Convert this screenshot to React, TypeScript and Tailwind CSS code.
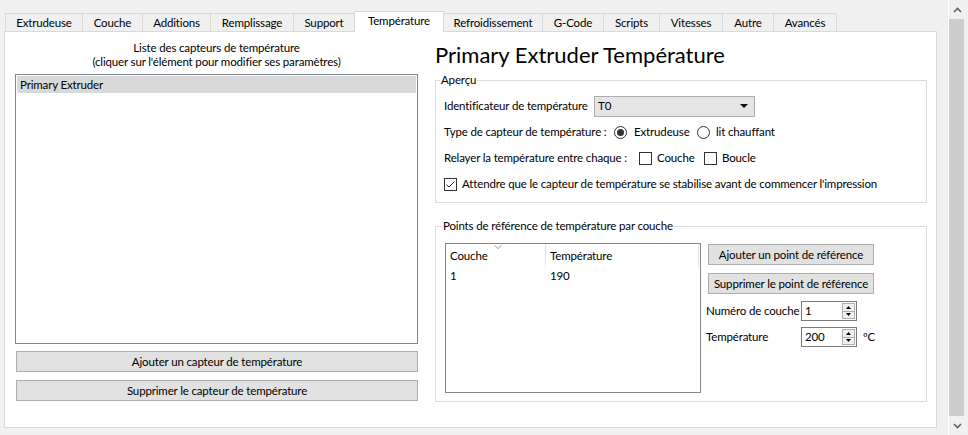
import React from 'react';

const tabs = [
  { label: 'Extrudeuse', w: 'w-[78px]' },
  { label: 'Couche', w: 'w-[61px]' },
  { label: 'Additions', w: 'w-[69px]' },
  { label: 'Remplissage', w: 'w-[84px]' },
  { label: 'Support', w: 'w-[62px]' },
  { label: 'Température', w: 'w-[90px]', active: true },
  { label: 'Refroidissement', w: 'w-[100px]' },
  { label: 'G-Code', w: 'w-[62px]' },
  { label: 'Scripts', w: 'w-[57px]' },
  { label: 'Vitesses', w: 'w-[64px]' },
  { label: 'Autre', w: 'w-[52px]' },
  { label: 'Avancés', w: 'w-[64px]' },
];

function Checkbox({ checked }: { checked?: boolean }) {
  return (
    <span className="w-[13px] h-[13px] border border-[#333333] bg-white flex items-center justify-center shrink-0">
      {checked && (
        <svg width="11" height="11" viewBox="0 0 11 11">
          <polyline points="1.5,5.5 4,8 9.5,2.5" fill="none" stroke="#333333" strokeWidth="1" />
        </svg>
      )}
    </span>
  );
}

function Radio({ checked }: { checked?: boolean }) {
  return (
    <span className="w-[13px] h-[13px] rounded-full border border-[#333333] bg-white flex items-center justify-center shrink-0">
      {checked && <span className="w-[7px] h-[7px] rounded-full bg-[#333333]" />}
    </span>
  );
}

function SpinBox({ value }: { value: string }) {
  return (
    <div className="w-[56px] h-[20px] border border-[#7a7a7a] bg-white flex">
      <span className="flex-1 pl-[3px] leading-[18px]">{value}</span>
      <div className="w-[14px] flex flex-col py-px pr-px">
        <span className="flex-1 border border-[#adadad] bg-[#f0f0f0] flex items-center justify-center">
          <svg width="5" height="3" viewBox="0 0 5 3"><polygon points="0,3 2.5,0 5,3" fill="#000" /></svg>
        </span>
        <span className="flex-1 border border-[#adadad] border-t-0 bg-[#f0f0f0] flex items-center justify-center">
          <svg width="5" height="3" viewBox="0 0 5 3"><polygon points="0,0 5,0 2.5,3" fill="#000" /></svg>
        </span>
      </div>
    </div>
  );
}

function Chevron({ up }: { up?: boolean }) {
  return (
    <svg width="9" height="6" viewBox="0 0 9 6">
      <polyline
        points={up ? '1,5 4.5,1.5 8,5' : '1,1 4.5,4.5 8,1'}
        fill="none"
        stroke="#606060"
        strokeWidth="1.6"
      />
    </svg>
  );
}

export default function App() {
  return (
    <div className="w-[968px] h-[435px] bg-[#f0f0f0] flex overflow-hidden whitespace-nowrap font-['Lato',sans-serif] text-[11.5px] tracking-[-0.15px] text-black">
      {/* main area */}
      <div className="w-[948px] pt-[11px] pl-[4px] flex flex-col">
        {/* tab strip */}
        <div className="flex items-end h-[20px] pl-[1px]">
          {tabs.map((t, i) =>
            t.active ? (
              <div
                key={t.label}
                className={`${t.w} ${i ? '-ml-px' : ''} h-[21px] -mb-px relative z-10 bg-white border border-b-0 border-[#d9d9d9] flex items-center justify-center pb-[2px]`}
              >
                {t.label}
              </div>
            ) : (
              <div
                key={t.label}
                className={`${t.w} ${i ? '-ml-px' : ''} h-[18px] bg-[#f0f0f0] border border-b-0 border-[#d9d9d9] flex items-center justify-center`}
              >
                {t.label}
              </div>
            )
          )}
        </div>

        {/* tab pane */}
        <div className="w-[933px] h-[397px] bg-white border border-[#d9d9d9] flex">
          {/* sensor list */}
          <div className="ml-[10px] w-[403px] flex flex-col pt-[9px]">
            <div className="text-center leading-[14px] mb-[5px]">
              <div>Liste des capteurs de température</div>
              <div>(cliquer sur l'élément pour modifier ses paramètres)</div>
            </div>
            <div className="h-[270px] border border-[#828790] bg-white p-px">
              <div className="h-[17px] bg-[#d9d9d9] pl-[3px] leading-[17px]">Primary Extruder</div>
            </div>
            <button className="mt-[7px] ml-px w-[402px] h-[21px] bg-[#e1e1e1] border border-[#adadad] text-center">
              Ajouter un capteur de température
            </button>
            <button className="mt-[8px] ml-px w-[402px] h-[21px] bg-[#e1e1e1] border border-[#adadad] text-center">
              Supprimer le capteur de température
            </button>
          </div>

          {/* sensor settings */}
          <div className="ml-[17px] w-[492px] flex flex-col pt-[10px]">
            <div className="text-[22px] leading-[26px] tracking-normal">Primary Extruder Température</div>

            {/* Aperçu */}
            <div className="mt-[12px] h-[123px] border border-[#dcdcdc] relative pt-[12px] pl-[8px]">
              <span className="absolute -top-[8px] left-[4px] bg-white px-px leading-[14px]">Aperçu</span>
              <div className="h-[26px] flex items-center">
                <span className="w-[150px]">Identificateur de température</span>
                <div className="w-[161px] h-[21px] bg-[#e5e5e5] border border-[#adadad] flex items-center pl-[3px] pr-[6px]">
                  <span className="flex-1">T0</span>
                  <svg width="8" height="4" viewBox="0 0 8 4"><polygon points="0,0 8,0 4,4" fill="#000" /></svg>
                </div>
              </div>
              <div className="h-[26px] flex items-center">
                <span className="w-[170px]">Type de capteur de température :</span>
                <div className="w-[83px] flex items-center gap-[7px]">
                  <Radio checked />
                  <span>Extrudeuse</span>
                </div>
                <div className="flex items-center gap-[6px]">
                  <Radio />
                  <span>lit chauffant</span>
                </div>
              </div>
              <div className="h-[26px] flex items-center">
                <span className="w-[195px]">Relayer la température entre chaque :</span>
                <div className="w-[65px] flex items-center gap-[5px]">
                  <Checkbox />
                  <span>Couche</span>
                </div>
                <div className="flex items-center gap-[5px]">
                  <Checkbox />
                  <span>Boucle</span>
                </div>
              </div>
              <div className="h-[26px] flex items-center gap-[5px]">
                <Checkbox checked />
                <span>Attendre que le capteur de température se stabilise avant de commencer l'impression</span>
              </div>
            </div>

            {/* Points de référence */}
            <div className="mt-[23px] h-[176px] border border-[#dcdcdc] relative pt-[16px] pl-[9px] flex">
              <span className="absolute -top-[8px] left-[6px] bg-white px-px leading-[14px]">
                Points de référence de température par couche
              </span>
              <div className="w-[256px] h-[150px] border border-[#828790] bg-white flex flex-col">
                <div className="h-[23px] flex">
                  <div className="w-[100px] border-r border-[#e5e5e5] pl-[4px] flex items-center relative">
                    Couche
                    <svg className="absolute left-[48px] top-[1px]" width="8" height="4" viewBox="0 0 8 4">
                      <polyline points="0.5,0.5 4,3.5 7.5,0.5" fill="none" stroke="#a0a0a0" strokeWidth="1" />
                    </svg>
                  </div>
                  <div className="w-[153px] border-r border-[#e5e5e5] pl-[4px] flex items-center">Température</div>
                </div>
                <div className="h-[18px] flex items-center">
                  <span className="w-[100px] pl-[4px]">1</span>
                  <span className="pl-[4px]">190</span>
                </div>
              </div>

              <div className="ml-[7px] pt-px flex flex-col">
                <button className="w-[166px] h-[21px] bg-[#e1e1e1] border border-[#adadad] text-center">
                  Ajouter un point de référence
                </button>
                <button className="mt-[8px] w-[166px] h-[21px] bg-[#e1e1e1] border border-[#adadad] text-center">
                  Supprimer le point de référence
                </button>
                <div className="mt-[4px] h-[26px] flex items-center -ml-[2px]">
                  <span className="w-[95px]">Numéro de couche</span>
                  <SpinBox value="1" />
                </div>
                <div className="h-[26px] flex items-center -ml-[2px]">
                  <span className="w-[95px]">Température</span>
                  <SpinBox value="200" />
                  <span className="ml-[6px]">ºC</span>
                </div>
              </div>
            </div>
          </div>
        </div>
      </div>

      {/* vertical scrollbar */}
      <div className="w-[17px] border-l border-white flex flex-col">
        <div className="h-[19px] flex items-center justify-center pt-px">
          <Chevron up />
        </div>
        <div className="flex-1 mr-px bg-[#cdcdcd]" />
        <div className="h-[19px] flex items-center justify-center">
          <Chevron />
        </div>
      </div>
    </div>
  );
}
